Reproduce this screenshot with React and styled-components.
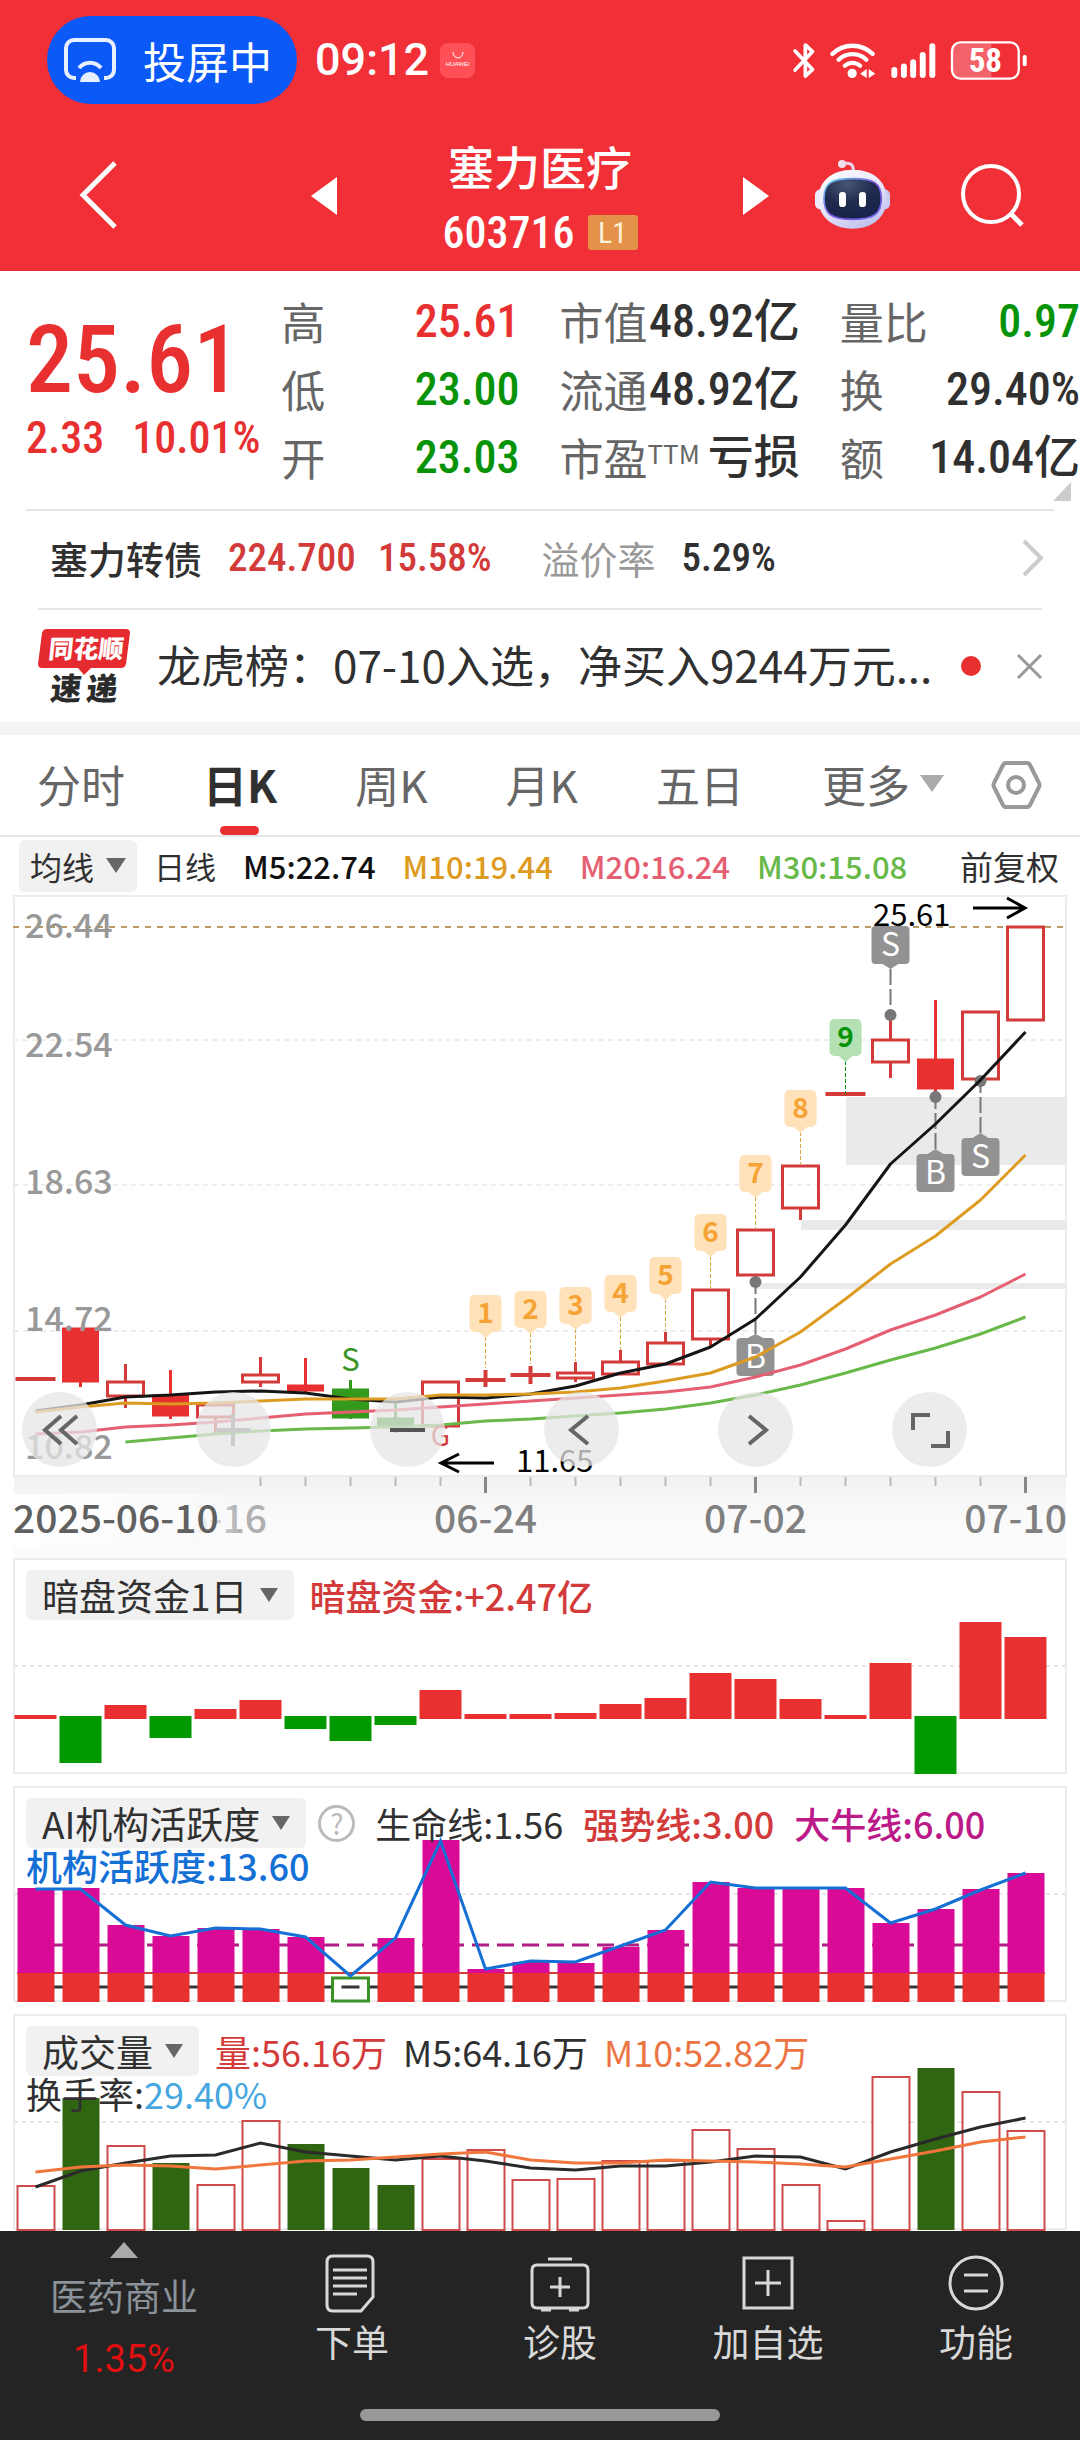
import { useState } from 'react';
import styled, { createGlobalStyle } from 'styled-components';

const cjk = "'Noto Sans CJK SC', sans-serif";
const din = "'Roboto Condensed', 'Noto Sans CJK SC', sans-serif";

const red = '#e93030';
const candleRed = '#d33a3a';
const green = '#079307';
const ink = '#303030';

const GlobalStyle = createGlobalStyle`
  * { box-sizing: border-box; }
  body {
    margin: 0;
    background: #fff;
    color: ${ink};
    font-family: ${cjk};
  }
  button {
    border: 0;
    padding: 0;
    background: none;
    color: inherit;
    font: inherit;
    cursor: pointer;
  }
  a { color: inherit; text-decoration: none; }
  svg { display: block; overflow: visible; }
`;

/* ---------- status bar and title ---------- */

const Top = styled.header`
  background: #f12f37;
  color: #fff;
`;

const StatusBar = styled.div`
  display: flex;
  align-items: center;
  height: 120px;
  padding: 0 52px 0 47px;
`;

const CastPill = styled.div`
  display: flex;
  align-items: center;
  gap: 27px;
  width: 250px;
  height: 88px;
  padding-left: 17px;
  border-radius: 44px;
  background: #0b59f7;
  font-size: 43px;
  line-height: 60px;
  white-space: nowrap;
`;

const Clock = styled.span`
  margin-left: 18px;
  font-family: Roboto, sans-serif;
  font-size: 45px;
  font-weight: 500;
  line-height: 60px;
`;

const AppBadge = styled.span`
  display: flex;
  flex-direction: column;
  align-items: center;
  justify-content: center;
  width: 35px;
  height: 35px;
  margin-left: 11px;
  border-radius: 8px;
  background: #ff5058;
  font-family: 'Liberation Sans', sans-serif;
  font-size: 6px;
  line-height: 8px;
`;

const StatusIcons = styled.div`
  display: flex;
  align-items: center;
  gap: 13px;
  margin-left: auto;
`;

const TitleBar = styled.div`
  display: grid;
  grid-template-columns: 1fr auto 1fr;
  align-items: center;
  height: 151px;
`;

const TitleSide = styled.div`
  display: flex;
  align-items: center;
  justify-content: space-between;
  height: 100%;
  padding: ${({ $right }) => ($right ? '0 56px 0 0' : '0 0 0 80px')};
`;

const RobotButton = styled.button`
  margin: 0 26px 4px 0;
`;

const Stock = styled.div`
  width: 406px;
  padding-top: 6px;
  text-align: center;
`;

const StockName = styled.h1`
  margin: 0 0 4px;
  font-size: 46px;
  font-weight: 500;
  line-height: 64px;
`;

const StockCode = styled.div`
  display: flex;
  align-items: center;
  justify-content: center;
  gap: 13px;
  font-family: ${din};
  font-size: 44px;
  font-weight: 500;
  line-height: 64px;
`;

const Level = styled.span`
  width: 50px;
  height: 35px;
  border-radius: 3px;
  background: #e4914a;
  color: #fdf1d8;
  font-size: 30px;
  font-weight: 400;
  line-height: 35px;
`;

/* ---------- quote ---------- */

const Quote = styled.section`
  position: relative;
  display: grid;
  grid-template-columns: minmax(0, 215fr) minmax(0, 238fr) minmax(0, 240fr) minmax(0, 240fr);
  column-gap: 40px;
  padding: 16px 0 18px 26px;
`;

const PriceBlock = styled.div`
  padding-top: 23px;
  color: ${red};
  font-family: ${din};
  font-weight: 500;
  white-space: nowrap;
`;

const Price = styled.div`
  font-size: 94px;
  line-height: 100px;
`;

const Change = styled.div`
  display: flex;
  gap: 28px;
  font-size: 44px;
  line-height: 56px;
`;

const Stats = styled.dl`
  margin: 0;
`;

const Stat = styled.div`
  display: flex;
  justify-content: space-between;
  height: 68px;
  font-size: 44px;
  line-height: 68px;
  white-space: nowrap;

  dt { color: #666; }
  dd {
    margin: 0;
    color: ${({ $color }) => $color || ink};
    font-family: ${din};
    font-size: 46px;
    font-weight: 500;
  }
  sup {
    font-size: 26px;
    line-height: 26px;
    vertical-align: 12px;
  }
`;

const Corner = styled.span`
  position: absolute;
  right: 9px;
  bottom: 8px;
  border-left: 18px solid transparent;
  border-bottom: 19px solid #ccc;
`;

const Divider = styled.hr`
  height: 2px;
  margin: 0 ${({ $inset }) => $inset}px;
  border: 0;
  background: #e4e4e4;
`;

const BondRow = styled.a`
  display: flex;
  align-items: center;
  height: 97px;
  padding: 0 36px 4px 50px;
  font-size: 38px;
  white-space: nowrap;
`;

const BondValue = styled.span`
  margin-left: ${({ $gap }) => $gap}px;
  color: ${({ $color }) => $color || ink};
  font-family: ${din};
  font-size: 39px;
  font-weight: 500;
`;

const BondLabel = styled.span`
  margin-left: 50px;
  color: #999;
`;

const Push = styled.span`
  margin-left: auto;
`;

const NewsRow = styled.div`
  display: flex;
  align-items: center;
  height: 112px;
  padding: 0 38px;
`;

const NewsText = styled.a`
  flex: 1;
  min-width: 0;
  margin: 0 24px 4px 26px;
  font-size: 44px;
  line-height: 60px;
  white-space: nowrap;
`;

const Dot = styled.span`
  width: 20px;
  height: 20px;
  margin-right: 36px;
  border-radius: 50%;
  background: ${red};
`;

const Band = styled.div`
  height: 13px;
  background: #f4f4f4;
`;

/* ---------- period tabs ---------- */

const TabBar = styled.nav`
  display: flex;
  align-items: center;
  justify-content: space-between;
  height: 102px;
  padding: 0 38px 0 37px;
  border-bottom: 2px solid #e6e6e6;
`;

const Tabs = styled.div`
  display: flex;
  gap: 78px;
  height: 100%;
`;

const Tab = styled.button`
  position: relative;
  display: flex;
  align-items: center;
  gap: 10px;
  height: 100%;
  padding-bottom: 3px;
  color: ${({ $active }) => ($active ? ink : '#666')};
  font-size: 44px;
  font-weight: ${({ $active }) => ($active ? 700 : 400)};
  white-space: nowrap;

  &::after {
    content: '';
    position: absolute;
    left: calc(50% - 20px);
    bottom: 0;
    width: 39px;
    height: 9px;
    border-radius: 5px;
    background: ${({ $active }) => ($active ? red : 'transparent')};
  }
`;

const Caret = styled.span`
  border: ${({ $size }) => $size}px solid transparent;
  border-top: ${({ $size }) => $size + 5}px solid ${({ $color }) => $color || '#666'};
  border-bottom: 0;
`;

/* ---------- charts ---------- */

const Averages = styled.div`
  display: flex;
  align-items: center;
  gap: 27px;
  height: 57px;
  padding: 0 21px 0 19px;
  font-size: 31px;
  white-space: nowrap;
`;

const AdjustButton = styled.button`
  margin-left: auto;
  font-size: 33px;
`;

const Legend = styled.span`
  color: ${({ $color }) => $color || ink};
  font-weight: ${({ $weight }) => $weight || 400};
`;

const Picker = styled.button`
  display: flex;
  align-items: center;
  gap: 12px;
  height: ${({ $small }) => ($small ? 52 : 50)}px;
  padding: 0 ${({ $small }) => ($small ? 11 : 16)}px;
  margin-right: ${({ $small }) => ($small ? -10 : 0)}px;
  border-radius: 6px;
  background: #f1f1f1;
  color: ${ink};
  font-size: ${({ $small }) => ($small ? 32 : 37)}px;
`;

const ChartArea = styled.section`
  position: relative;
`;

const Drawing = styled.svg`
  width: 100%;
  height: auto;
  font-family: ${cjk};
`;

const ChartTools = styled.div`
  position: absolute;
  top: 75%;
  left: 22px;
  right: 113px;
  display: flex;
  justify-content: space-between;
`;

const RoundButton = styled.button`
  display: grid;
  place-items: center;
  width: 75px;
  height: 75px;
  border-radius: 50%;
  background: rgba(230, 230, 230, 0.75);
`;

const Panel = styled.section`
  display: grid;
  margin-bottom: ${({ $last }) => ($last ? 0 : 12)}px;

  > * { grid-area: 1 / 1; }
`;

const PanelHead = styled.div`
  z-index: 1;
  padding: 12px 26px 0;
  font-size: 36px;
  line-height: 50px;
  white-space: nowrap;
`;

const LegendRow = styled.div`
  display: flex;
  align-items: center;
  gap: ${({ $gap }) => $gap}px;
  height: ${({ $second }) => ($second ? 34 : 50)}px;
`;

const Help = styled.button`
  width: 37px;
  height: 37px;
  margin: 0 0 0 -8px;
  border: 3px solid #bbb;
  border-radius: 50%;
  color: #bbb;
  font-size: 28px;
  line-height: 30px;
`;

/* ---------- bottom bar ---------- */

const BottomBar = styled.footer`
  height: 209px;
  background: #242424;
`;

const Actions = styled.nav`
  display: grid;
  grid-template-columns: 248fr repeat(4, 208fr);
  height: 178px;
`;

const Action = styled.button`
  display: flex;
  flex-direction: column;
  align-items: center;
  padding-top: 22px;
  color: #d8d8d8;
  font-size: 37px;
  line-height: 56px;
`;

const Sector = styled.a`
  display: flex;
  flex-direction: column;
  align-items: center;
  padding-top: 11px;
  color: #8b9299;
  font-size: 37px;
  line-height: 64px;
`;

const SectorArrow = styled.span`
  margin-bottom: 5px;
  border: 14px solid transparent;
  border-bottom: 16px solid #aaa;
  border-top: 0;
`;

const SectorChange = styled.span`
  color: #e01010;
  font-family: Roboto, sans-serif;
  font-size: 38px;
`;

const HomeBar = styled.div`
  width: 360px;
  height: 12px;
  margin: 0 auto;
  border-radius: 6px;
  background: #999;
`;

/* ---------- data ---------- */

const x = (i) => 35.5 + 45 * i;
const line = (values, from = 0) => values.map((v, i) => `${x(i + from)},${v}`).join(' ');

// kind, high, top of body, bottom of body, low
const candles = [
  ['flat', 485, 485, 485, 485],
  ['down', 434, 434, 488, 493],
  ['up', 470, 488, 502, 514],
  ['down', 476, 501, 522, 525],
  ['up', 511, 511, 523, 539],
  ['up', 463, 481, 488, 493],
  ['down', 464, 491, 497, 499],
  ['fall', 486, 495, 524, 525],
  ['fall', 508, 524, 532, 539],
  ['up', 488, 488, 532, 532],
  ['flat', 476, 486, 486, 493],
  ['flat', 472, 481, 481, 490],
  ['up', 468, 479, 484, 488],
  ['up', 456, 468, 480, 480],
  ['up', 438, 449, 470, 470],
  ['up', 396, 396, 445, 452],
  ['up', 336, 336, 381, 388],
  ['up', 272, 272, 314, 326],
  ['flat', 200, 200, 200, 200],
  ['up', 121, 146, 168, 184],
  ['down', 106, 165, 195, 203],
  ['up', 118, 118, 185, 185],
  ['up', 33, 33, 126, 126],
];

const ma5 = [517, 511, 503, 501, 498, 497, 499, 505, 508, 503, 504, 500, 492, 479, 470, 453, 425, 383, 331, 270, 230, 186, 138];
const ma10 = [518, 513, 509, 510, 509, 507, 505, 505, 505, 501, 501, 500, 498, 494, 487, 479, 463, 438, 405, 370, 342, 306, 261];
const ma20 = [540, 538, 533, 531, 528, 524, 520, 518, 516, 513, 510, 507, 504, 501, 498, 493, 483, 471, 455, 436, 421, 403, 380];
const ma30 = [548, 544, 540, 537, 535, 534, 533, 531, 527, 525, 522, 519, 515, 509, 501, 491, 479, 466, 454, 440, 423];

const tags = [
  [10, 401, 474], [11, 397, 470], [12, 393, 467], [13, 381, 456], [14, 363, 437],
  [15, 320, 394], [16, 261, 334], [17, 196, 270], [18, 125, 200],
];

const trades = [
  { label: 'S', i: 19, box: 32, tip: 75, dot: 121, side: 'above' },
  { label: 'B', i: 16, box: 444, tip: 440, dot: 388, side: 'below' },
  { label: 'B', i: 20, box: 260, tip: 255, dot: 203, side: 'below' },
  { label: 'S', i: 21, box: 244, tip: 239, dot: 187, side: 'below' },
];

const priceLabels = [['26.44', 44], ['22.54', 163], ['18.63', 300], ['14.72', 437], ['10.82', 565]];

const funds = [157, 205, 147, 180, 151, 142, 171, 183, 167, 132, 156, 156, 155, 146, 140, 115, 121, 141, 157, 105, 216, 64, 79];
const fundsDown = [1, 3, 6, 7, 8, 20];

const activity = [102, 102, 139, 150, 142, 143, 151, 0, 152, 54, 183, 176, 177, 161, 144, 96, 102, 102, 102, 137, 123, 103, 87];
const activityLine = [103, 103, 139, 150, 142, 143, 151, 190, 152, 55, 183, 175, 176, 160, 144, 96, 102, 102, 102, 137, 123, 104, 87];

const volume = [172, 84, 132, 149, 171, 107, 130, 154, 171, 145, 136, 166, 165, 147, 147, 116, 135, 171, 207, 63, 54, 78, 117];
const volumeDown = [1, 3, 6, 7, 8, 20];
const volume5 = [173, 157, 149, 142, 141, 129, 138, 142, 146, 142, 147, 154, 156, 152, 152, 148, 142, 143, 155, 138, 125, 113, 104];
const volume10 = [158, 153, 151, 152, 155, 151, 147, 146, 143, 140, 138, 146, 149, 149, 146, 147, 148, 150, 153, 145, 137, 128, 123];

const stats = [
  [['高', '25.61', red], ['低', '23.00', green], ['开', '23.03', green]],
  [['市值', '48.92亿'], ['流通', '48.92亿'], ['市盈', '亏损', null, 'TTM']],
  [['量比', '0.97', green], ['换', '29.40%'], ['额', '14.04亿']],
];

const periods = ['分时', '日K', '周K', '月K', '五日'];

/* ---------- drawings ---------- */

const CastIcon = () => (
  <svg width="52" height="46" viewBox="0 0 52 46" fill="none" stroke="#e8f0ff" strokeWidth="4">
    <path d="M12 41H10a8 8 0 0 1-8-8V11a8 8 0 0 1 8-8h32a8 8 0 0 1 8 8v22a8 8 0 0 1-8 8h-2" />
    <path d="M15 31a14 14 0 0 1 22 0" />
    <path d="M16 45a10 10 0 0 1 20 0z" fill="#e8f0ff" stroke="none" />
  </svg>
);

const Bluetooth = () => (
  <svg width="24" height="39" viewBox="40 62 72 118" fill="none" stroke="#fff" strokeWidth="11" strokeLinecap="round" strokeLinejoin="round">
    <path d="M49 92L102 148 80 168V74L102 94 49 150" />
  </svg>
);

const Wifi = () => (
  <svg width="48" height="39" viewBox="145 62 145 118" fill="none" stroke="#fff" strokeWidth="13" strokeLinecap="round">
    <path d="M155 101a88 88 0 0 1 122 0M174 119a60 60 0 0 1 84 0M193 137a34 34 0 0 1 46 0" />
    <circle cx="215" cy="160" r="14" fill="#fff" stroke="none" />
    <path d="M239 161l20-14v27zM285 161l-20-14v27z" fill="#fff" stroke="none" />
  </svg>
);

const Signal = () => (
  <svg width="47" height="39" viewBox="340 62 140 118" stroke="#fff" strokeWidth="18" strokeLinecap="round">
    <path d="M352 150v15M381 139v26M409 126v39M438 104v61M467 78v87" />
  </svg>
);

const Battery = () => (
  <svg width="78" height="41" viewBox="510 60 236 122">
    <path d="M538 70H635V172H538a20 20 0 0 1-20-20V90a20 20 0 0 1 20-20z" fill="#fff" opacity="0.25" />
    <rect x="516" y="66" width="202" height="110" rx="26" fill="none" stroke="#fff" strokeWidth="7" />
    <rect x="730" y="104" width="12" height="34" rx="5" fill="#fff" />
    <text x="617" y="157" textAnchor="middle" fill="#fff" fontSize="100" fontWeight="700" fontFamily="'Roboto Condensed', Roboto, sans-serif">58</text>
  </svg>
);

const Robot = () => (
  <svg width="75" height="70" viewBox="105 415 225 210">
    <defs>
      <linearGradient id="shell" x1="0" y1="0" x2="0.6" y2="1">
        <stop offset="0" stopColor="#fff" />
        <stop offset="0.6" stopColor="#e6e4f8" />
        <stop offset="1" stopColor="#c3c4ee" />
      </linearGradient>
      <linearGradient id="rim" x1="0" y1="0" x2="1" y2="1">
        <stop offset="0" stopColor="#59d3e8" />
        <stop offset="0.5" stopColor="#8256e0" />
        <stop offset="1" stopColor="#6c6cf0" />
      </linearGradient>
      <radialGradient id="face" cx="0.4" cy="0.15" r="0.9">
        <stop offset="0" stopColor="#4a5675" />
        <stop offset="0.5" stopColor="#202b4f" />
        <stop offset="1" stopColor="#16204a" />
      </radialGradient>
    </defs>
    <path d="M188 430c20-6 33 0 32 20" fill="none" stroke="#e9d5e6" strokeWidth="9" />
    <circle cx="186" cy="430" r="12" fill="#f1e2ee" />
    <rect x="105" y="506" width="40" height="60" rx="16" fill="#eceafd" />
    <rect x="290" y="506" width="40" height="60" rx="16" fill="#c9caf2" />
    <path d="M218 447c64 0 102 36 102 88s-40 89-102 89-103-37-103-89 39-88 103-88z" fill="url(#shell)" />
    <path d="M218 474c62 0 86 12 86 60s-26 62-86 62-86-14-86-62 24-60 86-60z" fill="url(#face)" stroke="url(#rim)" strokeWidth="5" />
    <rect x="177" y="514" width="21" height="45" rx="10" fill="#fff" />
    <rect x="237" y="514" width="21" height="45" rx="10" fill="#fff" />
  </svg>
);

const SearchIcon = () => (
  <svg width="63" height="63" viewBox="0 0 63 63" fill="none" stroke="#fff" strokeWidth="4">
    <circle cx="30" cy="30" r="28" />
    <path d="M50 50l11 11" strokeWidth="5" />
  </svg>
);

const NewsLogo = () => (
  <svg width="93" height="76" viewBox="0 0 93 76" fontFamily={cjk} fontWeight="900">
    <path d="M9 1h79q4 0 4 4l-4 31q-1 4-5 4H53l-7 7-6-7H4q-4 0-4-4L4 5q1-4 5-4z" fill="#e52b2f" />
    <g transform="skewX(-6)">
      <text x="13" y="30" fontSize="25" fill="#fff">同花顺</text>
      <text x="19" y="72" fontSize="31" fill="#2b2b2b">速<tspan dx="5">递</tspan></text>
    </g>
  </svg>
);

const Candle = ({ i, data: [kind, high, top, bottom, low] }) => {
  const cx = x(i);
  if (kind === 'flat') {
    return (
      <g stroke={candleRed} strokeWidth="4">
        <path d={`M${cx - 20} ${top}h40`} />
        {low > high && <path d={`M${cx} ${high}V${low}`} />}
      </g>
    );
  }
  if (kind === 'up') {
    return (
      <g stroke={candleRed} strokeWidth="3" fill="none">
        <path d={`M${cx} ${high}V${top}M${cx} ${bottom}V${low}`} />
        <rect x={cx - 18} y={top} width="36" height={bottom - top} />
      </g>
    );
  }
  const color = kind === 'down' ? red : '#339a1c';
  return (
    <g fill={color} stroke={color}>
      <path d={`M${cx} ${high}V${low}`} strokeWidth="3" />
      <rect x={cx - 18} y={top} width="36" height={bottom - top} />
    </g>
  );
};

const Trade = ({ label, i, box, tip, dot, side }) => {
  const cx = x(i);
  const base = side === 'above' ? box + 38 : box;
  return (
    <g>
      <path d={`M${cx} ${tip}V${dot}`} stroke="#777" strokeWidth="2" strokeDasharray="16 4" />
      <circle cx={cx} cy={dot} r="6" fill="#777" />
      <path d={`M${cx - 8} ${base}h16L${cx} ${tip}z`} fill="#929292" />
      <rect x={cx - 19} y={box} width="38" height="38" rx="4" fill="#929292" />
      <text x={cx} y={box + 30} textAnchor="middle" fontSize="32" fill="#fff">{label}</text>
    </g>
  );
};

const KLine = () => (
  <Drawing viewBox="0 0 1080 664" role="img" aria-label="日K">
    <defs>
      <linearGradient id="axis" x1="0" y1="0" x2="0" y2="1">
        <stop offset="0" stopColor="#f2f2f2" />
        <stop offset="0.5" stopColor="#fafafa" />
        <stop offset="1" stopColor="#fcfcfc" />
      </linearGradient>
      <linearGradient id="fade">
        <stop offset="0" stopColor="#fff" />
        <stop offset="0.8" stopColor="#fafafa" />
        <stop offset="1" stopColor="#fafafa" stopOpacity="0" />
      </linearGradient>
    </defs>

    <rect x="14" y="583" width="1052" height="81" fill="url(#axis)" />
    <rect x="14" y="2" width="1052" height="580" fill="none" stroke="#ececec" strokeWidth="2" />
    <path d="M14 146H1066M14 291H1066M14 437H1066" stroke="#dcdcdc" strokeDasharray="5 4" />

    <g fill="#eaeaea">
      <rect x="846" y="203" width="221" height="68" />
      <rect x="801" y="326" width="266" height="10" />
      <rect x="756" y="389" width="311" height="6" />
    </g>

    <path d="M13 33H1066" stroke="#b89a66" strokeWidth="2" strokeDasharray="6 6" />

    {candles.map((data, i) => <Candle key={i} i={i} data={data} />)}

    <g fontSize="34" fontWeight="500" fill="#999">
      {priceLabels.map(([text, y]) => <text key={text} x="25" y={y}>{text}</text>)}
    </g>

    {tags.map(([i, top, end], n) => {
      const last = n === 8;
      const fill = last ? '#b4e0b3' : '#ffe2ba';
      return (
        <g key={i}>
          <path d={`M${x(i)} ${top + 42}V${end}`} stroke={last ? '#079307' : '#dba53d'} strokeDasharray="4 2" />
          <path d={`M${x(i) - 8} ${top + 36}h16l-8 7z`} fill={fill} />
          <rect x={x(i) - 16} y={top} width="32" height="37" rx="5" fill={fill} />
          <text x={x(i)} y={top + 28} textAnchor="middle" fontSize="28" fontWeight="700" fill={last ? '#079307' : '#f5a335'}>{n + 1}</text>
        </g>
      );
    })}

    {trades.map((trade) => <Trade key={trade.i} {...trade} />)}

    <g fill="none" strokeWidth="3" strokeLinejoin="round">
      <polyline points={line(ma5)} stroke="#151515" />
      <polyline points={line(ma10)} stroke="#dd9b22" />
      <polyline points={line(ma20)} stroke="#e55f73" />
      <polyline points={line(ma30, 2)} stroke="#68b84a" />
    </g>

    <text x={x(7)} y="477" textAnchor="middle" fontSize="31" fill="#3a9326">S</text>
    <text x={x(9)} y="552" textAnchor="middle" fontSize="28" fill={candleRed}>G</text>

    <g fontSize="31" fill="#000">
      <text x="873" y="32">25.61</text>
      <text x="516" y="578">11.65</text>
    </g>
    <path d="M973 14H1025M1007 4l18 10-18 10M494 569H442M459 560l-18 9 18 9" fill="none" stroke="#000" strokeWidth="3" />

    <g stroke="#bbb" strokeWidth="2">
      {candles.map((_, i) => i > 4 && (i - 4) % 6 !== 0 && <path key={i} d={`M${x(i)} 583v9`} />)}
    </g>
    <g stroke="#888" strokeWidth="3">
      {[10, 16, 22].map((i) => <path key={i} d={`M${x(i)} 583v16`} />)}
    </g>

    <g fontSize="39" fontWeight="500" fill="#808080" textAnchor="middle">
      <text x={x(4)} y="639" fill="#b0b0b0">06-16</text>
      <text x={x(10)} y="639">06-24</text>
      <text x={x(16)} y="639">07-02</text>
      <text x="1067" y="639" textAnchor="end">07-10</text>
    </g>
    <rect x="14" y="600" width="226" height="52" fill="url(#fade)" />
    <text x="13" y="639" fontSize="39" fontWeight="500" fill="#606060">2025-06-10</text>
  </Drawing>
);

const Frame = ({ mid }) => (
  <>
    <rect x="14" y="1" width="1052" height="214" fill="none" stroke="#ececec" strokeWidth="2" />
    <path d={`M14 ${mid}H1066`} stroke="#e6e6e6" strokeWidth="2" strokeDasharray="4 4" />
  </>
);

const FundsChart = () => (
  <Drawing viewBox="0 0 1080 216" role="img" aria-label="暗盘资金">
    <Frame mid="108" />
    {funds.map((v, i) => (
      fundsDown.includes(i)
        ? <rect key={i} x={x(i) - 21} y="158" width="42" height={v - 158} fill="#009900" />
        : <rect key={i} x={x(i) - 21} y={v} width="42" height={161 - v} fill={red} />
    ))}
  </Drawing>
);

const ActivityChart = () => (
  <Drawing viewBox="0 0 1080 216" role="img" aria-label="机构活跃度">
    <Frame mid="108" />
    <path d="M36 201H1026" stroke="#333" strokeWidth="3" />
    <path d="M36 159H1026" stroke="#b01d85" strokeWidth="3" strokeDasharray="17 8" strokeDashoffset="14" />
    <path d="M17 187H1045" stroke="#d33a3a" strokeWidth="2" />
    {activity.map((v, i) => v > 0 && (
      <g key={i}>
        <rect x={x(i) - 18} y={v} width="37" height={187 - v} fill="#d90b96" />
        <rect x={x(i) - 18} y="187" width="37" height="29" fill={red} />
      </g>
    ))}
    <rect x={x(7) - 18} y="192" width="36" height="23" fill="#fff" stroke="#3a9326" strokeWidth="3" />
    <path d={`M${x(7) - 9} 201h18`} stroke="#333" strokeWidth="3" />
    <polyline points={line(activityLine)} fill="none" stroke="#1570d6" strokeWidth="3" />
  </Drawing>
);

const VolumeChart = () => (
  <Drawing viewBox="0 0 1080 217" role="img" aria-label="成交量">
    <Frame mid="108" />
    {volume.map((v, i) => (
      volumeDown.includes(i)
        ? <rect key={i} x={x(i) - 18} y={v} width="37" height={216 - v} fill="#306512" />
        : <rect key={i} x={x(i) - 18} y={v} width="37" height={216 - v} fill="#fff" stroke="#cf4a4a" strokeWidth="2" />
    ))}
    <polyline points={line(volume5)} fill="none" stroke="#2a2a2a" strokeWidth="3" />
    <polyline points={line(volume10)} fill="none" stroke="#f0763c" strokeWidth="3" />
  </Drawing>
);

const toolIcons = [
  ['更早', 'M19 3L3 17l16 14M35 3L19 17l16 14', '#666'],
  ['放大', 'M0 17h35M17 1v32', '#ccc'],
  ['缩小', 'M0 17h35', '#555'],
  ['上一根', 'M24 3L7 17l17 14', '#666'],
  ['下一根', 'M11 3l17 14-17 14', '#666'],
  ['全屏', 'M1 17V2h17M36 18v15H19', '#666'],
];

const actionIcons = [
  ['下单', <path key="p" d="M8 3h34q6 0 6 6v35L36 58H8q-6 0-6-6V9q0-6 6-6zM8 17h34M8 25h34M8 33h34M8 41h24" />],
  ['诊股', <path key="p" d="M17 6h24M6 12h46q5 0 5 5v33q0 5-5 5H6q-5 0-5-5V17q0-5 5-5zM29 24v20M19 34h20M10 57h10M38 57h10" />],
  ['加自选', <path key="p" d="M3 5h48v50H3zM27 17v26M14 30h26" />],
  ['功能', <path key="p" d="M27 4a26 26 0 1 1 0 52 26 26 0 1 1 0-52zM15 22h24M15 38h24" />],
];

const App = () => {
  const [period, setPeriod] = useState('日K');

  return (
    <>
      <GlobalStyle />
      <Top>
        <StatusBar>
          <CastPill><CastIcon />投屏中</CastPill>
          <Clock>09:12</Clock>
          <AppBadge>
            <svg width="12" height="8" viewBox="0 0 12 8" fill="none" stroke="#fff">
              <path d="M1 0a5 6 0 0 0 10 0" />
            </svg>
            HUAWEI
          </AppBadge>
          <StatusIcons>
            <Bluetooth />
            <Wifi />
            <Signal />
            <Battery />
          </StatusIcons>
        </StatusBar>
        <TitleBar>
          <TitleSide>
            <button aria-label="返回">
              <svg width="38" height="68" viewBox="0 0 38 68" fill="none" stroke="#fff" strokeWidth="5">
                <path d="M35 1L3 33l32 32" />
              </svg>
            </button>
            <button aria-label="上一只">
              <svg width="26" height="38" viewBox="0 0 26 38" fill="#fff"><path d="M26 0v38L0 19z" /></svg>
            </button>
          </TitleSide>
          <Stock>
            <StockName>塞力医疗</StockName>
            <StockCode>603716<Level>L1</Level></StockCode>
          </Stock>
          <TitleSide $right>
            <button aria-label="下一只">
              <svg width="26" height="38" viewBox="0 0 26 38" fill="#fff"><path d="M0 0v38l26-19z" /></svg>
            </button>
            <RobotButton aria-label="智能助手"><Robot /></RobotButton>
            <button aria-label="搜索"><SearchIcon /></button>
          </TitleSide>
        </TitleBar>
      </Top>

      <main>
        <Quote>
          <PriceBlock>
            <Price>25.61</Price>
            <Change><span>2.33</span><span>10.01%</span></Change>
          </PriceBlock>
          {stats.map((column, n) => (
            <Stats key={n}>
              {column.map(([label, value, color, sup]) => (
                <Stat key={label} $color={color}>
                  <dt>{label}{sup && <sup>{sup}</sup>}</dt>
                  <dd>{value}</dd>
                </Stat>
              ))}
            </Stats>
          ))}
          <Corner />
        </Quote>
        <Divider $inset={26} />

        <BondRow href="#bond">
          <Legend $weight={500}>塞力转债</Legend>
          <BondValue $gap={26} $color={candleRed}>224.700</BondValue>
          <BondValue $gap={22} $color={candleRed}>15.58%</BondValue>
          <BondLabel>溢价率</BondLabel>
          <BondValue $gap={26}>5.29%</BondValue>
          <Push>
            <svg width="22" height="38" viewBox="0 0 22 38" fill="none" stroke="#ccc" strokeWidth="4">
              <path d="M2 2l17 17L2 36" />
            </svg>
          </Push>
        </BondRow>
        <Divider $inset={38} />

        <NewsRow>
          <NewsLogo />
          <NewsText href="#news">龙虎榜：07-10入选，净买入9244万元...</NewsText>
          <Dot />
          <button aria-label="关闭">
            <svg width="25" height="25" viewBox="0 0 25 25" stroke="#999" strokeWidth="3">
              <path d="M1 1l23 23M24 1L1 24" />
            </svg>
          </button>
        </NewsRow>
        <Band />

        <TabBar>
          <Tabs>
            {periods.map((name) => (
              <Tab key={name} $active={name === period} onClick={() => setPeriod(name)}>{name}</Tab>
            ))}
            <Tab>更多<Caret $size={12} $color="#aaa" /></Tab>
          </Tabs>
          <button aria-label="设置">
            <svg width="51" height="50" viewBox="0 0 51 50" fill="none" stroke="#999" strokeWidth="4">
              <path d="M15 3h21q2 0 3 2l9 18q1 2 0 4l-9 18q-1 2-3 2H15q-2 0-3-2L3 27q-1-2 0-4l9-18q1-2 3-2z" />
              <circle cx="25" cy="25" r="8" />
            </svg>
          </button>
        </TabBar>

        <Averages>
          <Picker $small>均线<Caret $size={10} /></Picker>
          <Legend>日线</Legend>
          <Legend $color="#111" $weight={500}>M5:22.74</Legend>
          <Legend $color="#dd9b22" $weight={500}>M10:19.44</Legend>
          <Legend $color="#e55f73" $weight={500}>M20:16.24</Legend>
          <Legend $color="#68b84a" $weight={500}>M30:15.08</Legend>
          <AdjustButton>前复权</AdjustButton>
        </Averages>

        <ChartArea>
          <KLine />
          <ChartTools>
            {toolIcons.map(([label, d, stroke]) => (
              <RoundButton key={label} aria-label={label}>
                <svg width="35" height="34" viewBox="0 0 35 34" fill="none" stroke={stroke} strokeWidth="4"><path d={d} /></svg>
              </RoundButton>
            ))}
          </ChartTools>
        </ChartArea>

        <Panel>
          <FundsChart />
          <PanelHead>
            <LegendRow $gap={16}>
              <Picker>暗盘资金1日<Caret $size={9} /></Picker>
              <Legend $color={candleRed} $weight={500}>暗盘资金:+2.47亿</Legend>
            </LegendRow>
          </PanelHead>
        </Panel>

        <Panel>
          <ActivityChart />
          <PanelHead>
            <LegendRow $gap={20}>
              <Picker>AI机构活跃度<Caret $size={9} /></Picker>
              <Help>?</Help>
              <Legend>生命线:1.56</Legend>
              <Legend $color={candleRed} $weight={500}>强势线:3.00</Legend>
              <Legend $color="#bb1a88" $weight={500}>大牛线:6.00</Legend>
            </LegendRow>
            <LegendRow $second>
              <Legend $color="#1570d6" $weight={500}>机构活跃度:13.60</Legend>
            </LegendRow>
          </PanelHead>
        </Panel>

        <Panel $last>
          <VolumeChart />
          <PanelHead>
            <LegendRow $gap={16}>
              <Picker>成交量<Caret $size={9} /></Picker>
              <Legend $color={candleRed}>量:56.16万</Legend>
              <Legend>M5:64.16万</Legend>
              <Legend $color="#ec7442">M10:52.82万</Legend>
            </LegendRow>
            <LegendRow $second>
              <Legend>换手率:</Legend>
              <Legend $color="#46a6e0">29.40%</Legend>
            </LegendRow>
          </PanelHead>
        </Panel>
      </main>

      <BottomBar>
        <Actions>
          <Sector href="#sector">
            <SectorArrow />
            医药商业
            <SectorChange>1.35%</SectorChange>
          </Sector>
          {actionIcons.map(([label, shape]) => (
            <Action key={label}>
              <svg width="58" height="60" viewBox={label === '诊股' ? '0 0 58 60' : '-2 0 58 60'} fill="none" stroke="#d8d8d8" strokeWidth="3">
                {shape}
              </svg>
              {label}
            </Action>
          ))}
        </Actions>
        <HomeBar />
      </BottomBar>
    </>
  );
};

export default App;
